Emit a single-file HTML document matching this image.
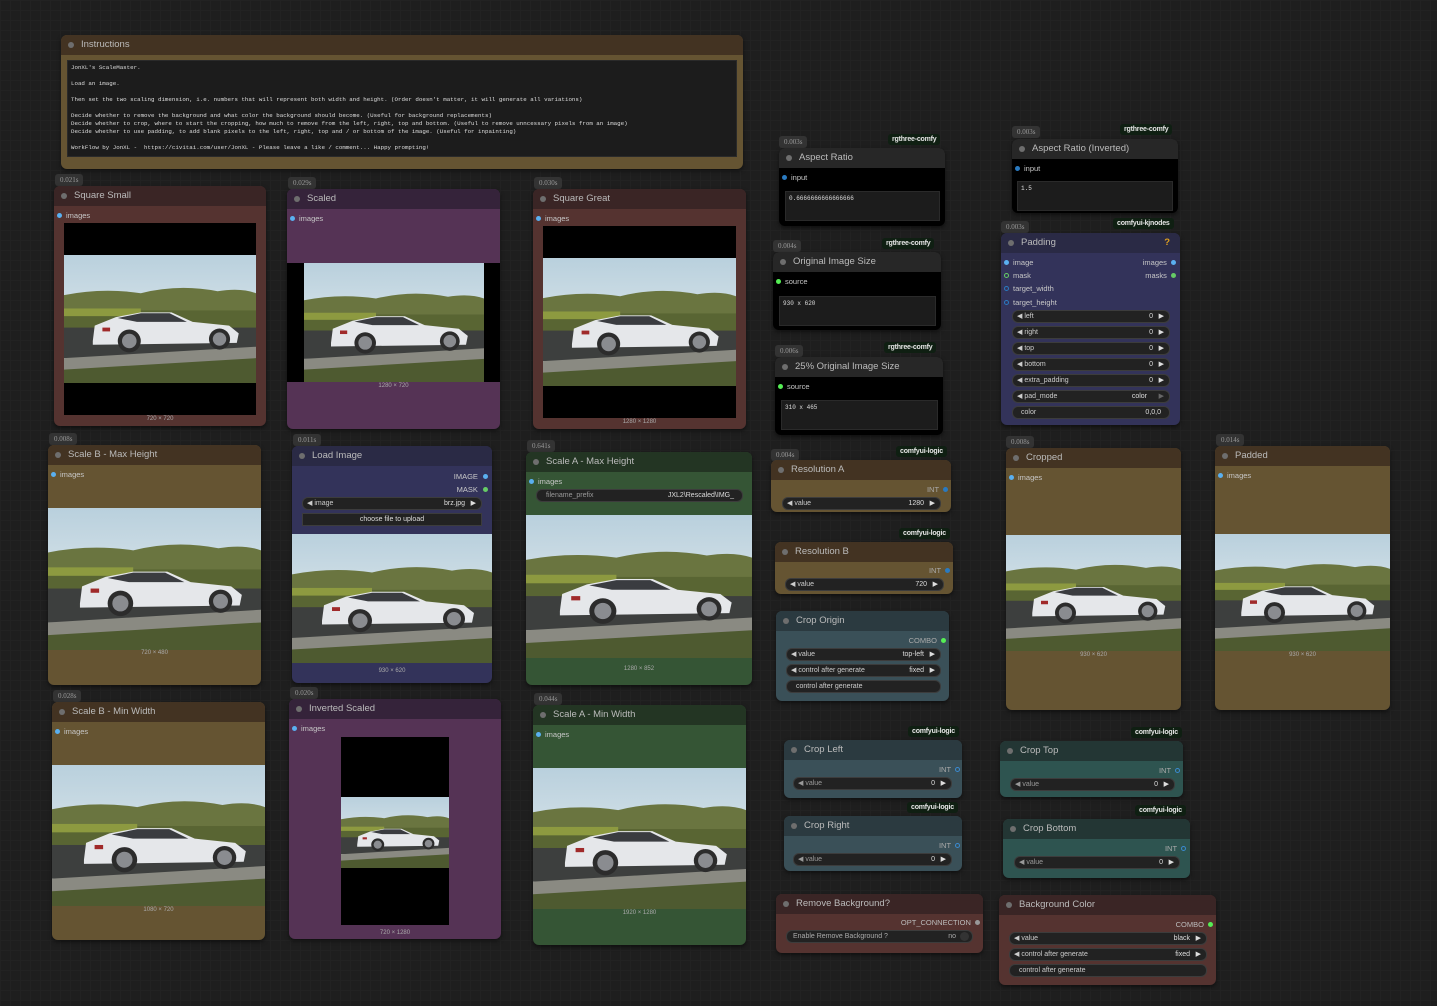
<!DOCTYPE html>
<html><head><meta charset="utf-8"><style>
body{margin:0;width:1437px;height:1006px;overflow:hidden;background-color:#1e1e1e;background-image:linear-gradient(#222 1px,transparent 1px),linear-gradient(90deg,#222 1px,transparent 1px);background-size:10px 10px;font-family:"Liberation Sans",sans-serif;position:relative}
.n{position:absolute;border-radius:6px;overflow:hidden;box-shadow:0 2px 4px rgba(0,0,0,.5)}
.t{height:20px;line-height:20px;font-size:9.5px;color:#bbb;padding-left:20px;position:relative;white-space:nowrap}
.t:before{content:"";position:absolute;left:7px;top:7px;width:6px;height:6px;border-radius:50%;background:#6e6e6e}
.ts{position:absolute;font:7px "Liberation Serif",serif;color:#999;background:#333;padding:2px 5px;border-radius:3px}
.bd{position:absolute;font:bold 7px "Liberation Sans",sans-serif;color:#e6e6e6;background:#0f1f12;padding:2px 4px;border-radius:3px;letter-spacing:-.2px}
.l{position:absolute;font-size:7.5px;color:#c8c8c8;white-space:nowrap}
.d{display:inline-block;width:5px;height:5px;border-radius:50%;background:#5ab0f0;margin-right:4px;vertical-align:0}
.w{position:absolute;height:11px;border-radius:6px;background:#222;border:1px solid #3c3c3c;font-size:7px;color:#999;line-height:11px;white-space:nowrap}
.w .v{position:absolute;right:16px;color:#ddd}
.w .a{position:absolute;right:5px;color:#ddd;font-size:7px}
.w .lf{color:#ccc;margin-left:4px}
.im{position:absolute}
.cap{position:absolute;font-size:6px;color:#aaa;text-align:center}
.tb{position:absolute;background:#1c1c1c;border:1px solid #2a2a2a;font:6px "Liberation Mono",monospace;color:#ddd;padding:3px 3px}
.red .t{background:#3a2525}.red{background:#553330}
.pur .t{background:#35233a}.pur{background:#553355}
.oli .t{background:#433322}.oli{background:#655432}
.grn .t{background:#233523}.grn{background:#355535}
.blu .t{background:#2a2a45}.blu{background:#33335a}
.blk .t{background:#272727}.blk{background:#000}
.tea .t{background:#2b3a40}.tea{background:#3a5058}
.cy .t{background:#233634}.cy{background:#2e5450}
</style></head><body>
<svg width="0" height="0" style="position:absolute"><defs>
<linearGradient id="sky" x1="0" y1="0" x2="0" y2="1"><stop offset="0" stop-color="#b9d0dd"/><stop offset="1" stop-color="#eef2f2"/></linearGradient>
<g id="car">
<rect x="0" y="0" width="100" height="67" fill="url(#sky)"/>
<path d="M0,21 Q20,17 40,20 Q60,15 80,19 Q92,17 100,20 L100,42 L0,42Z" fill="#6a7540"/>
<rect x="0" y="29" width="100" height="13" fill="#596533"/>
<rect x="0" y="28" width="40" height="4" fill="#8d9a40"/>
<rect x="0" y="38" width="100" height="16" fill="#3d3f3e"/>
<path d="M0,54 L100,48 L100,55 L0,61Z" fill="#8a8a82"/>
<path d="M0,60 L100,54 L100,67 L0,67Z" fill="#4e5a30"/>
<path d="M15,45 L16,37 L27,32.5 L40,30 L56,30 L67,35 L86,37 L91,41 L90,46 L15,47Z" fill="#e5e7ea"/>
<path d="M28,33 L40,30.5 L55,30.5 L64,35 L38,35Z" fill="#3a3c40"/>
<rect x="20" y="38" width="4" height="2" fill="#a02a2a"/>
<circle cx="34" cy="45" r="6" fill="#2c2c2c"/><circle cx="34" cy="45" r="3.8" fill="#8a8c90"/>
<circle cx="81" cy="44" r="5.5" fill="#2c2c2c"/><circle cx="81" cy="44" r="3.5" fill="#8a8c90"/>
</g></defs></svg>

<div class="n oli" style="left:61px;top:35px;width:682px;height:134px"><div class="t">Instructions</div></div>
<div class="tb" style="left:67px;top:60px;width:662px;height:89px;line-height:8px;font-size:5.8px;white-space:pre">JonXL's ScaleMaster.

Load an image.

Then set the two scaling dimension, i.e. numbers that will represent both width and height. (Order doesn't matter, it will generate all variations)

Decide whether to remove the background and what color the background should become. (Useful for background replacements)
Decide whether to crop, where to start the cropping, how much to remove from the left, right, top and bottom. (Useful to remove unncessary pixels from an image)
Decide whether to use padding, to add blank pixels to the left, right, top and / or bottom of the image. (Useful for inpainting)

WorkFlow by JonXL -  https://civitai.com/user/JonXL - Please leave a like / comment... Happy prompting!</div>

<div class="ts" style="left:55px;top:174px">0.021s</div>
<div class="n red" style="left:54px;top:186px;width:212px;height:240px"><div class="t">Square Small</div></div>
<div class="l" style="left:57px;top:211px"><span class="d"></span>images</div>
<div class="im" style="left:64px;top:223px;width:192px;height:192px;background:#000"></div>
<svg class="im" style="left:64px;top:255px;width:192px;height:128px" viewBox="0 0 100 67" preserveAspectRatio="none"><use href="#car"/></svg>
<div class="cap" style="left:54px;top:416px;width:212px">720 × 720</div>

<div class="ts" style="left:288px;top:177px">0.029s</div>
<div class="n pur" style="left:287px;top:189px;width:213px;height:240px"><div class="t">Scaled</div></div>
<div class="l" style="left:290px;top:214px"><span class="d"></span>images</div>
<div class="im" style="left:287px;top:263px;width:213px;height:119px;background:#000"></div>
<svg class="im" style="left:304px;top:263px;width:180px;height:119px" viewBox="0 0 100 67" preserveAspectRatio="none"><use href="#car"/></svg>
<div class="cap" style="left:287px;top:383px;width:213px">1280 × 720</div>

<div class="ts" style="left:534px;top:177px">0.030s</div>
<div class="n red" style="left:533px;top:189px;width:213px;height:240px"><div class="t">Square Great</div></div>
<div class="l" style="left:536px;top:214px"><span class="d"></span>images</div>
<div class="im" style="left:543px;top:226px;width:193px;height:192px;background:#000"></div>
<svg class="im" style="left:543px;top:258px;width:193px;height:128px" viewBox="0 0 100 67" preserveAspectRatio="none"><use href="#car"/></svg>
<div class="cap" style="left:533px;top:419px;width:213px">1280 × 1280</div>

<div class="ts" style="left:49px;top:433px">0.008s</div>
<div class="n oli" style="left:48px;top:445px;width:213px;height:240px"><div class="t">Scale B - Max Height</div></div>
<div class="l" style="left:51px;top:470px"><span class="d"></span>images</div>
<svg class="im" style="left:48px;top:508px;width:213px;height:142px" viewBox="0 0 100 67" preserveAspectRatio="none"><use href="#car"/></svg>
<div class="cap" style="left:48px;top:650px;width:213px">720 × 480</div>

<div class="ts" style="left:293px;top:434px">0.011s</div>
<div class="n blu" style="left:292px;top:446px;width:200px;height:237px"><div class="t">Load Image</div></div>
<div class="l" style="left:420px;top:472px;width:68px;text-align:right">IMAGE <span class="d" style="margin:0 0 0 3px"></span></div>
<div class="l" style="left:420px;top:485px;width:68px;text-align:right">MASK <span class="d" style="margin:0 0 0 3px;background:#6c6"></span></div>
<div class="w" style="left:302px;top:497px;width:178px"><span class="lf">◀ image</span><span class="v">brz.jpg</span><span class="a">▶</span></div>
<div class="w" style="left:302px;top:513px;width:178px;border-radius:0;text-align:center;color:#ddd">choose file to upload</div>
<svg class="im" style="left:292px;top:534px;width:200px;height:129px" viewBox="0 0 100 67" preserveAspectRatio="none"><use href="#car"/></svg>
<div class="cap" style="left:292px;top:668px;width:200px">930 × 620</div>

<div class="ts" style="left:527px;top:440px">0.641s</div>
<div class="n grn" style="left:526px;top:452px;width:226px;height:233px"><div class="t">Scale A - Max Height</div></div>
<div class="l" style="left:529px;top:477px"><span class="d"></span>images</div>
<div class="w" style="left:536px;top:489px;width:205px"><span class="lf" style="margin-left:9px;color:#999">filename_prefix</span><span class="v" style="right:8px">JXL2\Rescaled\IMG_</span></div>
<svg class="im" style="left:526px;top:515px;width:226px;height:143px" viewBox="0 0 100 67" preserveAspectRatio="none"><use href="#car"/></svg>
<div class="cap" style="left:526px;top:666px;width:226px">1280 × 852</div>

<div class="ts" style="left:53px;top:690px">0.028s</div>
<div class="n oli" style="left:52px;top:702px;width:213px;height:238px"><div class="t">Scale B - Min Width</div></div>
<div class="l" style="left:55px;top:727px"><span class="d"></span>images</div>
<svg class="im" style="left:52px;top:765px;width:213px;height:141px" viewBox="0 0 100 67" preserveAspectRatio="none"><use href="#car"/></svg>
<div class="cap" style="left:52px;top:907px;width:213px">1080 × 720</div>

<div class="ts" style="left:290px;top:687px">0.020s</div>
<div class="n pur" style="left:289px;top:699px;width:212px;height:240px"><div class="t">Inverted Scaled</div></div>
<div class="l" style="left:292px;top:724px"><span class="d"></span>images</div>
<div class="im" style="left:341px;top:737px;width:108px;height:188px;background:#000"></div>
<svg class="im" style="left:341px;top:797px;width:108px;height:71px" viewBox="0 0 100 67" preserveAspectRatio="none"><use href="#car"/></svg>
<div class="cap" style="left:289px;top:930px;width:212px">720 × 1280</div>

<div class="ts" style="left:534px;top:693px">0.044s</div>
<div class="n grn" style="left:533px;top:705px;width:213px;height:240px"><div class="t">Scale A - Min Width</div></div>
<div class="l" style="left:536px;top:730px"><span class="d"></span>images</div>
<svg class="im" style="left:533px;top:768px;width:213px;height:141px" viewBox="0 0 100 67" preserveAspectRatio="none"><use href="#car"/></svg>
<div class="cap" style="left:533px;top:910px;width:213px">1920 × 1280</div>

<div class="ts" style="left:779px;top:136px">0.003s</div>
<div class="bd" style="left:888px;top:134px">rgthree-comfy</div>
<div class="n blk" style="left:779px;top:148px;width:166px;height:78px"><div class="t">Aspect Ratio</div></div>
<div class="l" style="left:782px;top:173px"><span class="d" style="background:#2a7ac0"></span>input</div>
<div class="tb" style="left:785px;top:191px;width:147px;height:22px">0.6666666666666666</div>

<div class="ts" style="left:1012px;top:126px">0.003s</div>
<div class="bd" style="left:1120px;top:124px">rgthree-comfy</div>
<div class="n blk" style="left:1012px;top:139px;width:166px;height:74px"><div class="t">Aspect Ratio (Inverted)</div></div>
<div class="l" style="left:1015px;top:164px"><span class="d" style="background:#2a7ac0"></span>input</div>
<div class="tb" style="left:1017px;top:181px;width:148px;height:22px">1.5</div>

<div class="ts" style="left:773px;top:240px">0.004s</div>
<div class="bd" style="left:882px;top:238px">rgthree-comfy</div>
<div class="n blk" style="left:773px;top:252px;width:168px;height:78px"><div class="t">Original Image Size</div></div>
<div class="l" style="left:776px;top:277px"><span class="d" style="background:#5e5"></span>source</div>
<div class="tb" style="left:779px;top:296px;width:149px;height:22px">930 x 620</div>

<div class="ts" style="left:775px;top:345px">0.006s</div>
<div class="bd" style="left:884px;top:342px">rgthree-comfy</div>
<div class="n blk" style="left:775px;top:357px;width:168px;height:78px"><div class="t">25% Original Image Size</div></div>
<div class="l" style="left:778px;top:382px"><span class="d" style="background:#5e5"></span>source</div>
<div class="tb" style="left:781px;top:400px;width:149px;height:22px">310 x 465</div>

<div class="ts" style="left:1001px;top:221px">0.003s</div>
<div class="bd" style="left:1113px;top:218px">comfyui-kjnodes</div>
<div class="n blu" style="left:1001px;top:233px;width:179px;height:192px"><div class="t">Padding<span style="position:absolute;right:10px;color:#e0a020;font-weight:bold">?</span></div></div>
<div class="l" style="left:1004px;top:258px"><span class="d"></span>image</div>
<div class="l" style="left:1100px;top:258px;width:76px;text-align:right">images <span class="d" style="margin:0 0 0 2px"></span></div>
<div class="l" style="left:1004px;top:271px"><span class="d" style="background:none;border:1px solid #6c6;width:3px;height:3px"></span>mask</div>
<div class="l" style="left:1100px;top:271px;width:76px;text-align:right">masks <span class="d" style="margin:0 0 0 2px;background:#6c6"></span></div>
<div class="l" style="left:1004px;top:284px"><span class="d" style="background:none;border:1px solid #2a7ac0;width:3px;height:3px"></span>target_width</div>
<div class="l" style="left:1004px;top:298px"><span class="d" style="background:none;border:1px solid #2a7ac0;width:3px;height:3px"></span>target_height</div>
<div class="w" style="left:1012px;top:310px;width:156px"><span class="lf">◀ left</span><span class="v">0</span><span class="a">▶</span></div>
<div class="w" style="left:1012px;top:326px;width:156px"><span class="lf">◀ right</span><span class="v">0</span><span class="a">▶</span></div>
<div class="w" style="left:1012px;top:342px;width:156px"><span class="lf">◀ top</span><span class="v">0</span><span class="a">▶</span></div>
<div class="w" style="left:1012px;top:358px;width:156px"><span class="lf">◀ bottom</span><span class="v">0</span><span class="a">▶</span></div>
<div class="w" style="left:1012px;top:374px;width:156px"><span class="lf">◀ extra_padding</span><span class="v">0</span><span class="a">▶</span></div>
<div class="w" style="left:1012px;top:390px;width:156px"><span class="lf">◀ pad_mode</span><span class="v" style="right:22px">color</span><span class="a" style="color:#666">▶</span></div>
<div class="w" style="left:1012px;top:406px;width:156px"><span class="lf" style="margin-left:8px">color</span><span class="v" style="right:8px">0,0,0</span></div>

<div class="ts" style="left:771px;top:449px">0.004s</div>
<div class="bd" style="left:896px;top:446px">comfyui-logic</div>
<div class="n oli" style="left:771px;top:460px;width:180px;height:52px"><div class="t">Resolution A</div></div>
<div class="l" style="left:880px;top:485px;width:68px;text-align:right;color:#aaa">INT <span class="d" style="margin:0 0 0 2px;background:#2a7ac0"></span></div>
<div class="w" style="left:782px;top:497px;width:157px"><span class="lf">◀ value</span><span class="v">1280</span><span class="a">▶</span></div>

<div class="bd" style="left:899px;top:528px">comfyui-logic</div>
<div class="n oli" style="left:775px;top:542px;width:178px;height:52px"><div class="t">Resolution B</div></div>
<div class="l" style="left:882px;top:566px;width:68px;text-align:right;color:#aaa">INT <span class="d" style="margin:0 0 0 2px;background:#2a7ac0"></span></div>
<div class="w" style="left:785px;top:578px;width:157px"><span class="lf">◀ value</span><span class="v">720</span><span class="a">▶</span></div>

<div class="n tea" style="left:776px;top:611px;width:173px;height:90px"><div class="t">Crop Origin</div></div>
<div class="l" style="left:876px;top:636px;width:70px;text-align:right;color:#aaa">COMBO <span class="d" style="margin:0 0 0 2px;background:#5e5"></span></div>
<div class="w" style="left:786px;top:648px;width:153px"><span class="lf">◀ value</span><span class="v">top-left</span><span class="a">▶</span></div>
<div class="w" style="left:786px;top:664px;width:153px"><span class="lf">◀ control after generate</span><span class="v">fixed</span><span class="a">▶</span></div>
<div class="w" style="left:786px;top:680px;width:153px"><span class="lf" style="margin-left:9px">control after generate</span></div>

<div class="ts" style="left:1006px;top:436px">0.008s</div>
<div class="n oli" style="left:1006px;top:448px;width:175px;height:262px"><div class="t">Cropped</div></div>
<div class="l" style="left:1009px;top:473px"><span class="d"></span>images</div>
<svg class="im" style="left:1006px;top:535px;width:175px;height:116px" viewBox="0 0 100 67" preserveAspectRatio="none"><use href="#car"/></svg>
<div class="cap" style="left:1006px;top:652px;width:175px">930 × 620</div>

<div class="ts" style="left:1216px;top:434px">0.014s</div>
<div class="n oli" style="left:1215px;top:446px;width:175px;height:264px"><div class="t">Padded</div></div>
<div class="l" style="left:1218px;top:471px"><span class="d"></span>images</div>
<svg class="im" style="left:1215px;top:534px;width:175px;height:117px" viewBox="0 0 100 67" preserveAspectRatio="none"><use href="#car"/></svg>
<div class="cap" style="left:1215px;top:652px;width:175px">930 × 620</div>

<div class="bd" style="left:908px;top:726px">comfyui-logic</div>
<div class="n tea" style="left:784px;top:740px;width:178px;height:58px"><div class="t">Crop Left</div></div>
<div class="l" style="left:890px;top:765px;width:70px;text-align:right;color:#aaa">INT <span class="d" style="margin:0 0 0 2px;background:none;border:1px solid #3a8ad0;width:3px;height:3px"></span></div>
<div class="w" style="left:793px;top:777px;width:157px"><span class="lf" style="color:#999">◀ value</span><span class="v">0</span><span class="a">▶</span></div>

<div class="bd" style="left:907px;top:802px">comfyui-logic</div>
<div class="n tea" style="left:784px;top:816px;width:178px;height:55px"><div class="t">Crop Right</div></div>
<div class="l" style="left:890px;top:841px;width:70px;text-align:right;color:#aaa">INT <span class="d" style="margin:0 0 0 2px;background:none;border:1px solid #3a8ad0;width:3px;height:3px"></span></div>
<div class="w" style="left:793px;top:853px;width:157px"><span class="lf" style="color:#999">◀ value</span><span class="v">0</span><span class="a">▶</span></div>

<div class="bd" style="left:1131px;top:727px">comfyui-logic</div>
<div class="n cy" style="left:1000px;top:741px;width:183px;height:56px"><div class="t">Crop Top</div></div>
<div class="l" style="left:1110px;top:766px;width:70px;text-align:right;color:#aaa">INT <span class="d" style="margin:0 0 0 2px;background:none;border:1px solid #3a8ad0;width:3px;height:3px"></span></div>
<div class="w" style="left:1010px;top:778px;width:163px"><span class="lf" style="color:#999">◀ value</span><span class="v">0</span><span class="a">▶</span></div>

<div class="bd" style="left:1135px;top:805px">comfyui-logic</div>
<div class="n cy" style="left:1003px;top:819px;width:187px;height:59px"><div class="t">Crop Bottom</div></div>
<div class="l" style="left:1116px;top:844px;width:70px;text-align:right;color:#aaa">INT <span class="d" style="margin:0 0 0 2px;background:none;border:1px solid #3a8ad0;width:3px;height:3px"></span></div>
<div class="w" style="left:1014px;top:856px;width:164px"><span class="lf" style="color:#999">◀ value</span><span class="v">0</span><span class="a">▶</span></div>

<div class="n red" style="left:776px;top:894px;width:207px;height:59px"><div class="t">Remove Background?</div></div>
<div class="l" style="left:880px;top:918px;width:100px;text-align:right;color:#bbb">OPT_CONNECTION <span class="d" style="margin:0 0 0 2px;background:#999"></span></div>
<div class="w" style="left:786px;top:930px;width:185px"><span class="lf" style="margin-left:6px;color:#aaa">Enable Remove Background ?</span><span class="v" style="right:16px;color:#aaa">no</span><span style="position:absolute;right:3px;top:1px;width:9px;height:9px;border-radius:50%;background:#333"></span></div>

<div class="n red" style="left:999px;top:895px;width:217px;height:90px"><div class="t">Background Color</div></div>
<div class="l" style="left:1140px;top:920px;width:73px;text-align:right;color:#bbb">COMBO <span class="d" style="margin:0 0 0 2px;background:#5e5"></span></div>
<div class="w" style="left:1009px;top:932px;width:196px"><span class="lf">◀ value</span><span class="v">black</span><span class="a">▶</span></div>
<div class="w" style="left:1009px;top:948px;width:196px"><span class="lf">◀ control after generate</span><span class="v">fixed</span><span class="a">▶</span></div>
<div class="w" style="left:1009px;top:964px;width:196px"><span class="lf" style="margin-left:9px">control after generate</span></div>
</body></html>
